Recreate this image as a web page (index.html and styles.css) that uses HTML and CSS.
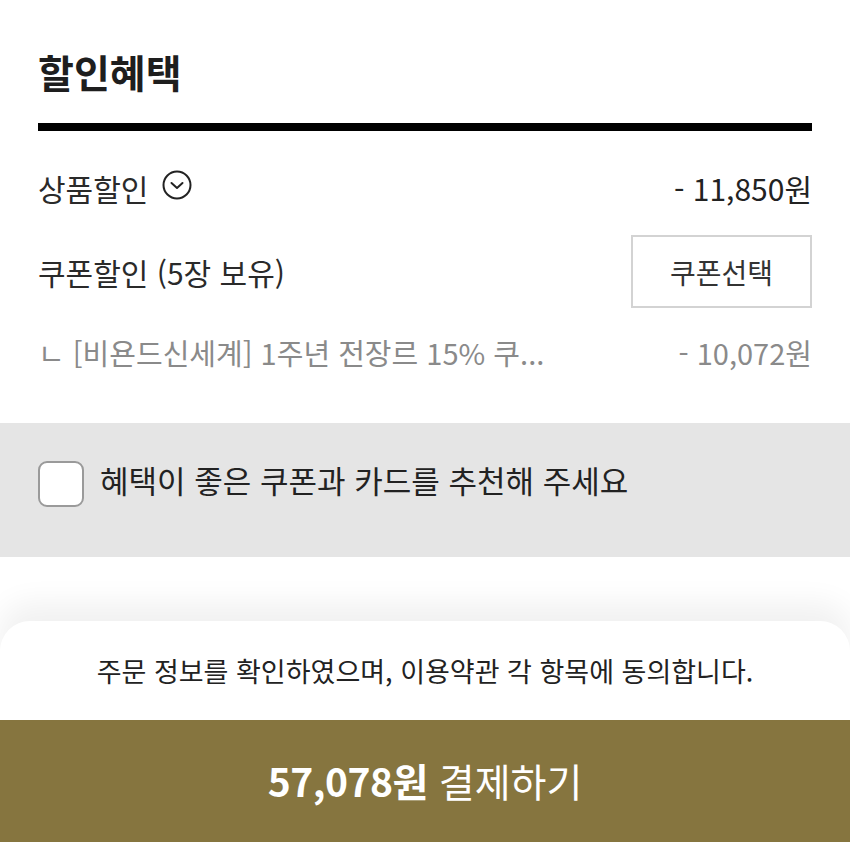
FILE: index.html
```html
<!DOCTYPE html>
<html lang="ko">
<head>
<meta charset="utf-8">
<link rel="stylesheet" href="styles.css">
</head>
<body>
<div class="page">
  <section class="discount">
    <h2 class="title">할인혜택</h2>
    <div class="rule"></div>
    <div class="row row-product">
      <div class="label">상품할인
        <svg class="chev" width="30" height="30" viewBox="0 0 30 30"><circle cx="15" cy="15" r="13.5" fill="none" stroke="#222" stroke-width="2"/><path d="M9.5 13 L15 18 L20.5 13" fill="none" stroke="#222" stroke-width="2" stroke-linecap="round" stroke-linejoin="round"/></svg>
      </div>
      <div class="amount">- 11,850원</div>
    </div>
    <div class="row row-coupon">
      <div class="label">쿠폰할인 (5장 보유)</div>
      <button class="coupon-btn">쿠폰선택</button>
    </div>
    <div class="row row-sub">
      <div class="sub-label">ㄴ [비욘드신세계] 1주년 전장르 15% 쿠...</div>
      <div class="sub-amount">- 10,072원</div>
    </div>
  </section>
  <section class="recommend">
    <span class="checkbox"></span>
    <span class="rec-text">혜택이 좋은 쿠폰과 카드를 추천해 주세요</span>
  </section>
  <div class="spacer"></div>
  <section class="sheet">
    <p class="agree">주문 정보를 확인하였으며, 이용약관 각 항목에 동의합니다.</p>
    <div class="pay"><span class="price">57,078원</span> <span class="pay-label">결제하기</span></div>
  </section>
</div>
</body>
</html>
```

FILE: styles.css
```css
* { box-sizing: border-box; }
html, body { margin: 0; padding: 0; background: #fff; }
body {
  font-family: "Noto Sans CJK KR", "Noto Sans", sans-serif;
  color: #222;
  width: 850px;
  overflow: hidden;
}
.page { width: 850px; }
.discount { padding: 49px 38px 0 38px; }
.title {
  margin: 0;
  font-size: 39px;
  line-height: 44px;
  font-weight: 700;
  color: #1e1e1e;
}
.rule { height: 8px; background: #000; margin-top: 30px; }
.row {
  display: flex;
  justify-content: space-between;
  align-items: center;
}
.row-product { height: 58px; margin-top: 28px; }
.label {
  font-size: 30px;
  line-height: 40px;
  color: #2a2a2a;
  display: flex;
  align-items: center;
}
.chev { margin-left: 14px; margin-top: -6px; }
.amount { font-size: 30px; line-height: 40px; color: #222; }
.row-coupon { margin-top: 18px; height: 73px; }
.coupon-btn {
  width: 181px;
  height: 73px;
  background: #fff;
  border: 2px solid #d3d3d3;
  font-family: inherit;
  font-size: 28px;
  color: #333;
  padding: 0;
}
.row-sub { margin-top: 24px; height: 40px; }
.sub-label, .sub-amount {
  font-size: 29px;
  line-height: 40px;
  color: #8a8a8a;
}
.recommend {
  margin-top: 51px;
  height: 134px;
  background: #e5e5e5;
  display: flex;
  align-items: center;
  padding: 0 38px 12px 38px;
}
.checkbox {
  width: 46px;
  height: 46px;
  border: 2px solid #9a9a9a;
  border-radius: 9px;
  background: #fff;
  flex: none;
}
.rec-text {
  margin-left: 16px;
  font-size: 31px;
  line-height: 40px;
  color: #222;
  margin-top: -8px;
}
.spacer { height: 64px; }
.sheet {
  border-radius: 30px 30px 0 0;
  background: #fff;
  box-shadow: 0 -18px 30px rgba(0,0,0,0.06);
}
.agree {
  margin: 0;
  padding: 33px 0 32px 0;
  text-align: center;
  font-size: 27px;
  line-height: 34px;
  color: #222;
}
.pay {
  background: #86753f;
  height: 122px;
  padding-top: 40px;
  text-align: center;
  color: #fff;
  font-size: 39px;
  line-height: 40px;
}
.price { font-weight: 700; letter-spacing: -0.5px; }
.pay-label { font-weight: 400; }
```
